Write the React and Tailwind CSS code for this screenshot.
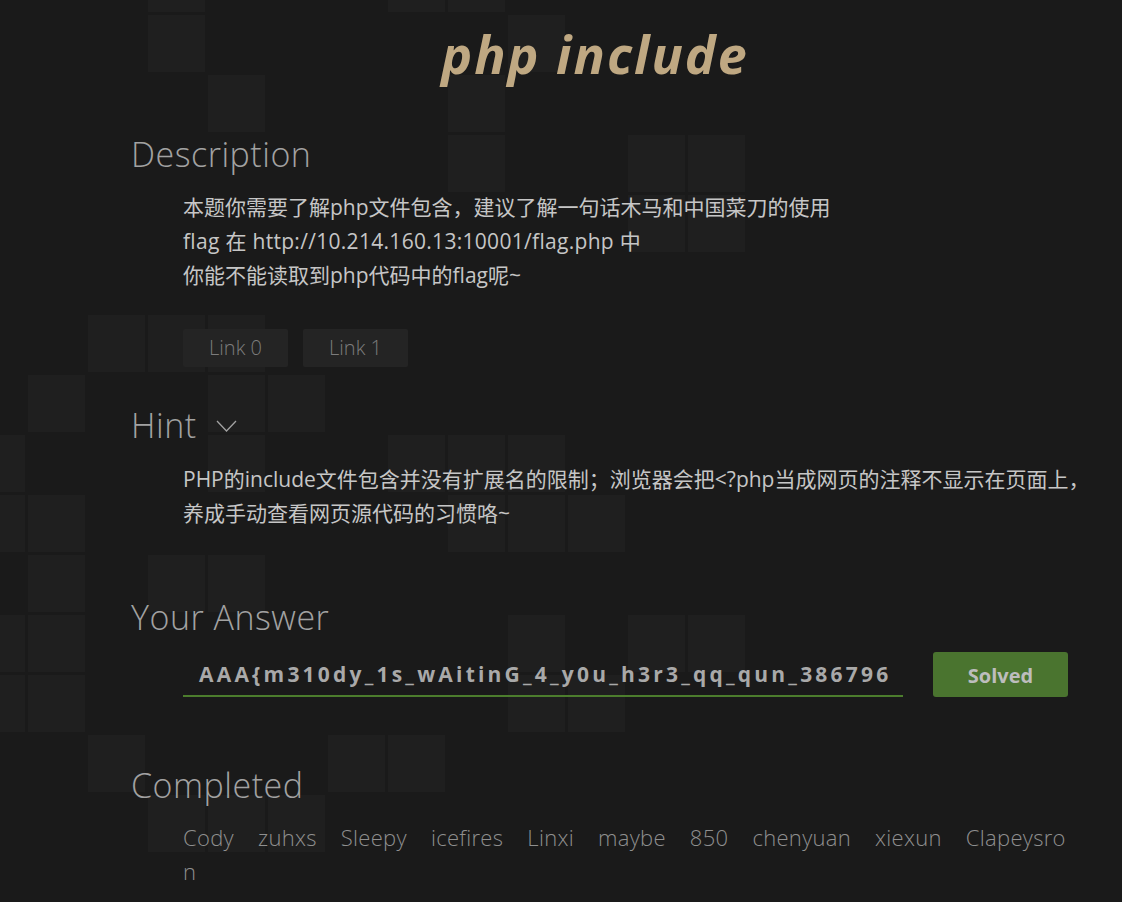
import React from "react";

const squares = [
  [148, -45], [388, -45], [448, -45],
  [148, 15], [508, 15],
  [208, 75], [448, 75],
  [448, 135], [628, 135], [688, 135],
  [628, 195], [688, 195],
  [88, 315], [148, 315], [208, 315],
  [28, 375], [208, 375], [268, 375],
  [-32, 435], [208, 435], [388, 435], [448, 435], [508, 435],
  [-32, 495], [28, 495], [448, 495], [508, 495], [568, 495],
  [28, 555], [148, 555], [208, 555],
  [-32, 615], [28, 615], [508, 615], [628, 615], [688, 615],
  [-32, 675], [28, 675], [508, 675], [568, 675],
  [88, 735], [328, 735], [388, 735],
  [148, 795], [208, 795], [268, 795],
];

const names = ["Cody", "zuhxs", "Sleepy", "icefires", "Linxi", "maybe", "850", "chenyuan", "xiexun", "Clapeysro"];

function Heading({ children }) {
  return (
    <h2 className="text-[34px] leading-[40px] font-light tracking-[0.5px] text-[#a2a2a2]">{children}</h2>
  );
}

export default function App() {
  return (
    <div className="relative min-h-[902px] overflow-hidden bg-[#1a1a1a] font-['Open_Sans','Noto_Sans_CJK_SC',sans-serif]">
      <svg className="absolute inset-0 h-full w-full" aria-hidden="true">
        {squares.map(([x, y], i) => (
          <rect key={i} x={x} y={y} width="57" height="57" fill="#1f1f1f" />
        ))}
      </svg>

      <div className="relative pl-[131px] pr-[34px] pt-[24px]">
        <h1 className="pr-[29px] text-center text-[52px] leading-[60px] font-bold italic tracking-[2px] text-[#bfa882]">
          php include
        </h1>

        <section className="mt-[50px]">
          <Heading>Description</Heading>
          <div className="mt-[16px] pl-[52px] text-[21px] leading-[34px] text-[#c6c6c6] whitespace-nowrap">
            <p>本题你需要了解php文件包含，建议了解一句话木马和中国菜刀的使用</p>
            <p className="tracking-[0.3px]">flag 在 http://10.214.160.13:10001/flag.php 中</p>
            <p>你能不能读取到php代码中的flag呢~</p>
          </div>
          <div className="mt-[37px] flex gap-[15px] pl-[52px]">
            <button className="h-[38px] w-[105px] rounded-[2px] bg-[#242424] text-[20px] font-light text-[#7c7c7c]">Link 0</button>
            <button className="h-[38px] w-[105px] rounded-[2px] bg-[#242424] text-[20px] font-light text-[#7c7c7c]">Link 1</button>
          </div>
        </section>

        <section className="mt-[38px]">
          <div className="flex items-center gap-[19px]">
            <Heading>Hint</Heading>
            <svg width="21" height="12" viewBox="0 0 21 12" className="mt-[2px]">
              <polyline points="1,1 10.5,11 20,1" fill="none" stroke="#a2a2a2" strokeWidth="1.3" />
            </svg>
          </div>
          <div className="mt-[17px] pl-[52px] text-[21px] leading-[34px] text-[#c6c6c6] whitespace-nowrap">
            <p>PHP的include文件包含并没有扩展名的限制；浏览器会把&lt;?php当成网页的注释不显示在页面上，</p>
            <p>养成手动查看网页源代码的习惯咯~</p>
          </div>
        </section>

        <section className="mt-[67px]">
          <Heading>Your Answer</Heading>
          <div className="mt-[15px] flex items-end gap-[30px] pl-[52px]">
            <div className="flex h-[45px] w-[720px] items-center border-b-2 border-[#4c7d2d] pl-[16px] pt-[2px] text-[21px] font-bold tracking-[3.2px] text-[#a9a9a9] whitespace-nowrap overflow-hidden">
              AAA{"{"}m310dy_1s_wAitinG_4_y0u_h3r3_qq_qun_386796
            </div>
            <button className="h-[45px] w-[135px] rounded-[3px] bg-[#4a742f] pt-[2px] text-[20px] font-bold text-[#bdbdbd]">
              Solved
            </button>
          </div>
        </section>

        <section className="mt-[68px]">
          <Heading>Completed</Heading>
          <div className="mt-[15px] pl-[52px] text-[22px] leading-[34px] font-light tracking-[0.3px] text-[#8f8f8f]">
            <div className="flex gap-x-[24px] whitespace-nowrap">
              {names.map((n) => (
                <span key={n}>{n}</span>
              ))}
            </div>
            <div>n</div>
          </div>
        </section>
      </div>
    </div>
  );
}
